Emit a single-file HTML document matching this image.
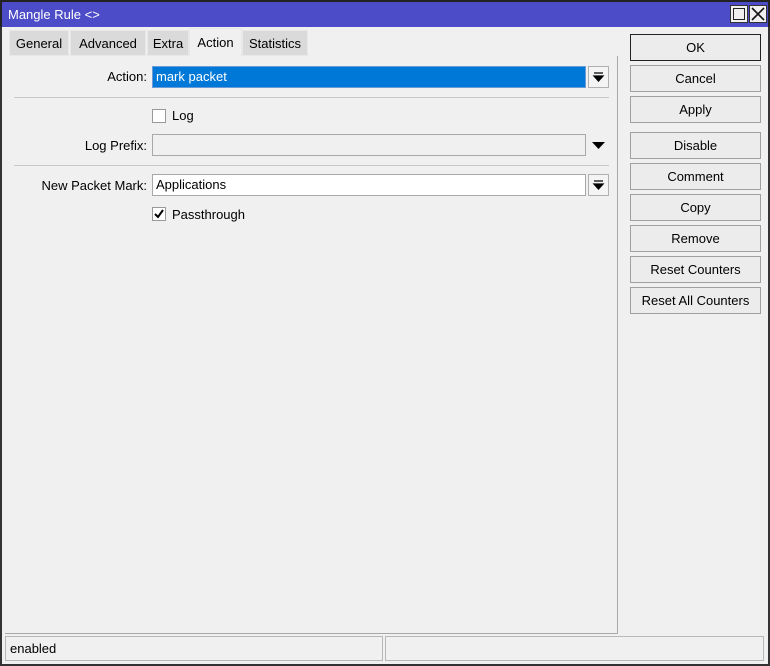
<!DOCTYPE html>
<html><head><style>
*{margin:0;padding:0;box-sizing:border-box}
body{width:770px;height:666px;background:#f0f0f0;font-family:"Liberation Sans",sans-serif;font-size:13px;color:#000;position:relative;overflow:hidden}
.a{position:absolute}
.title{left:0;top:0;width:770px;height:27px;background:#4c4cc8;border:2px solid #222;border-bottom:none}
.title span{position:absolute;left:6px;top:5px;color:#fff;font-size:13px}
.wb{top:5px;width:18px;height:18px;background:#f0f0f0;border:1px solid #333}
.tab{top:30px;height:26px;background:#dadada;border:1px solid #e8e8e8;text-align:center;line-height:26px}
.tab.act{top:28px;height:29px;background:#f0f0f0;line-height:28px;border-bottom:none}
.lbl{text-align:right;width:140px;left:7px}
.fld{height:22px;border:1px solid #a8a8a8;background:#fff;padding-left:3px;line-height:20px}
.dd{width:21px;height:22px;border:1px solid #b0b0b0;background:#f4f4f4}
.sep{height:1px;background:#c8c8c8;left:14px;width:595px}
.cb{width:14px;height:14px;border:1px solid #999;background:#fff}
.btn{left:630px;width:131px;height:27px;border:1px solid #a0a0a0;background:#ececec;text-align:center;line-height:25px}
</style></head><body>
<div class="a" style="left:0;top:0;width:770px;height:666px;border:2px solid #333;border-top:none"></div>
<div class="a title"><span>Mangle Rule &lt;&gt;</span></div>
<div class="a wb" style="left:730px"><div class="a" style="left:2px;top:2px;width:12px;height:12px;border:1px solid #222"></div></div>
<div class="a wb" style="left:749px"><svg width="16" height="16" style="position:absolute;left:0;top:0"><path d="M2 2L14 14M14 2L2 14" stroke="#111" stroke-width="1.6"/></svg></div>

<div class="a tab" style="left:9px;width:60px">General</div>
<div class="a tab" style="left:70px;width:76px">Advanced</div>
<div class="a tab" style="left:147px;width:42px">Extra</div>
<div class="a tab act" style="left:189px;width:53px">Action</div>
<div class="a tab" style="left:242px;width:66px">Statistics</div>
<div class="a" style="left:617px;top:56px;width:1px;height:578px;background:#a8a8a8"></div>
<div class="a" style="left:5px;top:633px;width:613px;height:1px;background:#a8a8a8"></div>

<div class="a lbl" style="top:69px">Action:</div>
<div class="a fld" style="left:152px;top:66px;width:434px;background:#0078d7;color:#fff;border-color:#6a9ad8">mark packet</div>
<div class="a dd" style="left:588px;top:66px"><svg width="19" height="20"><path d="M5 6h9M5 9h9l-4.5 5z" stroke="#000" fill="#000" stroke-width="1.3"/></svg></div>
<div class="a sep" style="top:97px"></div>
<div class="a cb" style="left:152px;top:109px"></div>
<div class="a" style="left:172px;top:108px">Log</div>
<div class="a lbl" style="top:138px">Log Prefix:</div>
<div class="a fld" style="left:152px;top:134px;width:434px;background:#f0f0f0"></div>
<svg class="a" style="left:592px;top:140px" width="14" height="10"><path d="M0 2h13l-6.5 7z" fill="#000"/></svg>
<div class="a sep" style="top:165px"></div>
<div class="a lbl" style="top:178px">New Packet Mark:</div>
<div class="a fld" style="left:152px;top:174px;width:434px">Applications</div>
<div class="a dd" style="left:588px;top:174px"><svg width="19" height="20"><path d="M5 6h9M5 9h9l-4.5 5z" stroke="#000" fill="#000" stroke-width="1.3"/></svg></div>
<div class="a cb" style="left:152px;top:207px"><svg width="12" height="12" style="position:absolute;left:0;top:0"><path d="M2 6l3 3 5-7" stroke="#000" stroke-width="2" fill="none"/></svg></div>
<div class="a" style="left:172px;top:207px">Passthrough</div>

<div class="a btn" style="top:34px;border-color:#222">OK</div>
<div class="a btn" style="top:65px">Cancel</div>
<div class="a btn" style="top:96px">Apply</div>
<div class="a btn" style="top:132px">Disable</div>
<div class="a btn" style="top:163px">Comment</div>
<div class="a btn" style="top:194px">Copy</div>
<div class="a btn" style="top:225px">Remove</div>
<div class="a btn" style="top:256px">Reset Counters</div>
<div class="a btn" style="top:287px">Reset All Counters</div>

<div class="a" style="left:5px;top:636px;width:378px;height:25px;border:1px solid #b8b8b8;padding:4px 0 0 4px">enabled</div>
<div class="a" style="left:385px;top:636px;width:379px;height:25px;border:1px solid #b8b8b8"></div>
</body></html>
